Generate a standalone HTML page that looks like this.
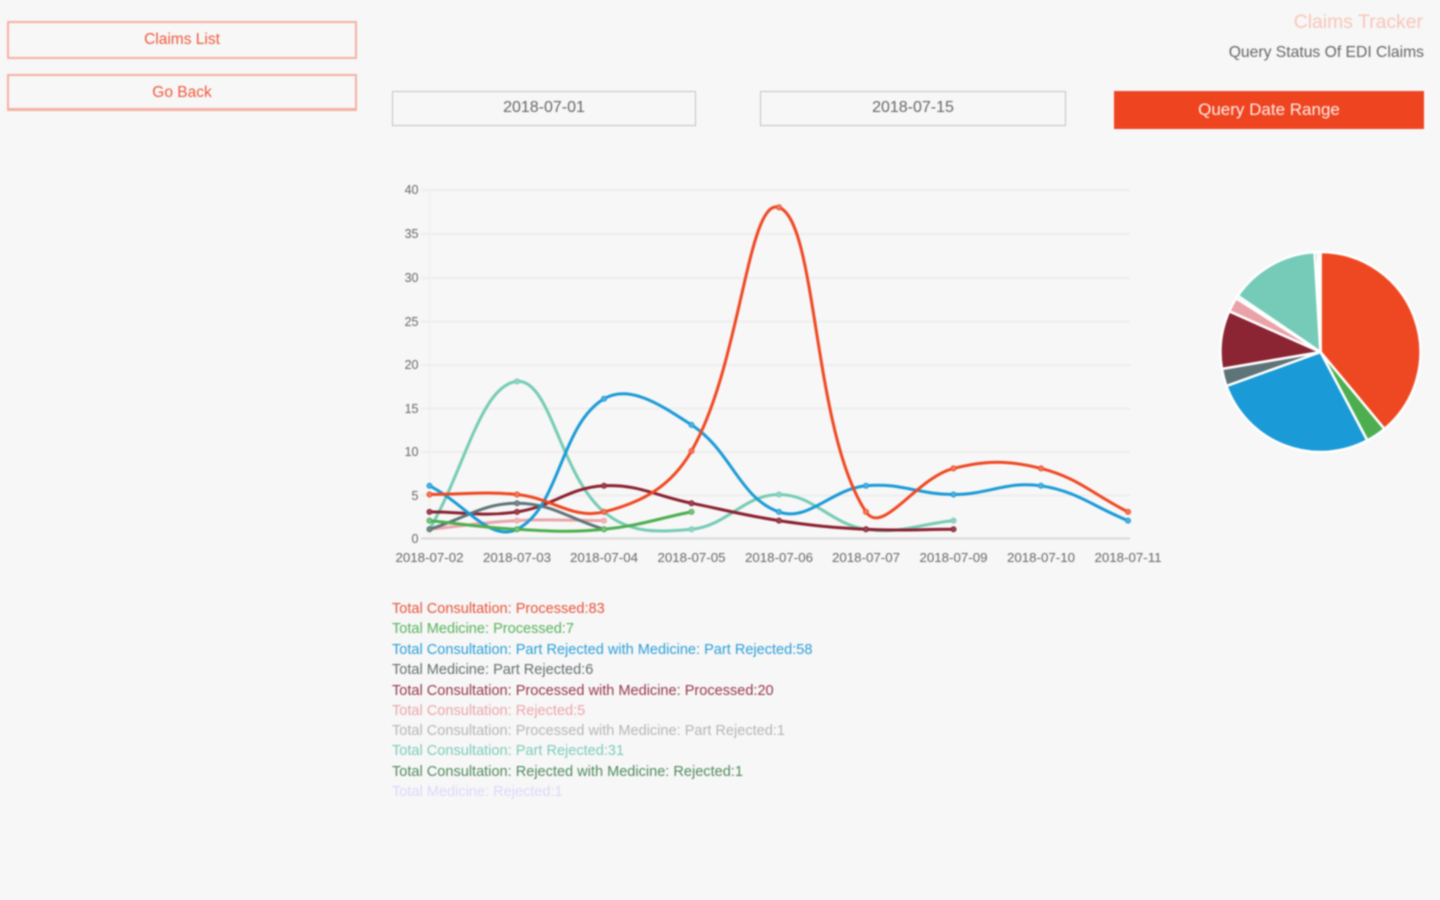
<!DOCTYPE html>
<html><head><meta charset="utf-8"><title>Claims Tracker</title>
<style>
html,body{margin:0;padding:0;width:1440px;height:900px;overflow:hidden;background:#f7f7f7}
#w{position:absolute;left:0;top:0;width:1440px;height:900px;filter:blur(.75px);font-family:"Liberation Sans",sans-serif}
.a{position:absolute;box-sizing:border-box;white-space:nowrap}
.b{border:2px solid #f5b0a3;color:#ee5a3c;text-align:center;font-size:15.500px;left:7px;width:350px}
.d{border:1.500px solid #c2c4c4;color:#666;text-align:center;font-size:16px;height:35px;top:91px;line-height:32px}
.l{position:absolute;left:392px;font-size:14.550px;line-height:20px;white-space:nowrap}
svg text{font-family:"Liberation Sans",sans-serif}
</style></head><body>
<div id="w">
<div class="a b" style="top:21px;height:38px;line-height:33px">Claims List</div>
<div class="a b" style="top:74px;height:37px;line-height:33px;border-bottom-width:3px">Go Back</div>
<div class="a" style="right:17px;top:10px;font-size:19.400px;line-height:24px;color:#f8c6b8">Claims Tracker</div>
<div class="a" style="right:16px;top:43px;font-size:15.700px;line-height:20px;color:#666">Query Status Of EDI Claims</div>
<div class="a d" style="left:392px;width:304px">2018-07-01</div>
<div class="a d" style="left:760px;width:306px">2018-07-15</div>
<div class="a" style="left:1114px;top:91px;width:310px;height:38px;background:#ee4420;color:#fdeee8;text-align:center;font-size:17px;line-height:37px">Query Date Range</div>

<svg class="a" id="s" style="left:0;top:0" width="1440" height="900" viewBox="0 0 1440 900">
<g id="grid" fill="none" stroke="#ebebeb" stroke-width="1.500">
<path d="M421 190H1130M421 234H1130M421 278H1130M421 321.500H1130M421 365H1130M421 408.500H1130M421 452H1130M421 495.500H1130"/>
<path d="M429.500 190V538" stroke="#efefef"/>
<path d="M421 538.500H1130" stroke="#d8d8d8" stroke-width="2"/>
</g>
<g font-size="12.500" fill="#666" text-anchor="end">
<text x="418.500" y="194">40</text><text x="418.500" y="238">35</text><text x="418.500" y="282">30</text><text x="418.500" y="326">25</text><text x="418.500" y="369">20</text><text x="418.500" y="413">15</text><text x="418.500" y="456">10</text><text x="418.500" y="500">5</text><text x="418.500" y="543">0</text>
</g>
<g font-size="13.300" fill="#666" text-anchor="middle">
<text x="429.500" y="562">2018-07-02</text><text x="517" y="562">2018-07-03</text><text x="604" y="562">2018-07-04</text><text x="691.500" y="562">2018-07-05</text><text x="779" y="562">2018-07-06</text><text x="866" y="562">2018-07-07</text><text x="953.500" y="562">2018-07-09</text><text x="1041" y="562">2018-07-10</text><text x="1128" y="562">2018-07-11</text>
</g>
<g id="lines"></g>
<g id="pie"></g>
</svg>

<div class="l" style="top:599px;color:#e8533a">Total Consultation: Processed:83</div>
<div class="l" style="top:619px;color:#58b25c">Total Medicine: Processed:7</div>
<div class="l" style="top:640px;color:#2a9fd8">Total Consultation: Part Rejected with Medicine: Part Rejected:58</div>
<div class="l" style="top:660px;color:#666e70">Total Medicine: Part Rejected:6</div>
<div class="l" style="top:680.500px;color:#96384a">Total Consultation: Processed with Medicine: Processed:20</div>
<div class="l" style="top:700.500px;color:#eca5aa">Total Consultation: Rejected:5</div>
<div class="l" style="top:721px;color:#b5b5b5">Total Consultation: Processed with Medicine: Part Rejected:1</div>
<div class="l" style="top:741px;color:#7accb8">Total Consultation: Part Rejected:31</div>
<div class="l" style="top:761.500px;color:#4f8a5e">Total Consultation: Rejected with Medicine: Rejected:1</div>
<div class="l" style="top:781.500px;color:#dcd8fa">Total Medicine: Rejected:1</div>
</div>
<script>
(function(){
var X=[429.5,517,604,691.5,779,866,953.5,1041,1128];
function Y(v){return 538-8.7*v}
var sets=[
["#ee4822","#f17a5e",[5,5,3,10,38,3,8,8,3]],
["#4cae4f","#7cc47e",[2,1,1,3]],
["#1a9ad6","#4fb0e0",[6,1,16,13,3,6,5,6,2]],
["#5f7478","#73868a",[1,4,1]],
["#8b2030","#9c4452",[3,3,6,4,2,1,1]],
["#eba3a8","#efb6ba",[1,2,2]],
["#75cbb4","#90d6c4",[1,18,3,1,5,1,2]]
];
function path(d){
 var p=d.map(function(v,i){return [X[i],Y(v)]}),n=p.length,s="M"+p[0][0]+" "+p[0][1],t=.4,cp=[];
 for(var i=0;i<n;i++){
  var a=p[Math.max(i-1,0)],c=p[i],b=p[Math.min(i+1,n-1)];
  var d1=Math.hypot(c[0]-a[0],c[1]-a[1]),d2=Math.hypot(b[0]-c[0],b[1]-c[1]),sum=d1+d2||1;
  var fa=t*d1/sum,fb=t*d2/sum;
  cp.push([[c[0]-fa*(b[0]-a[0]),c[1]-fa*(b[1]-a[1])],[c[0]+fb*(b[0]-a[0]),c[1]+fb*(b[1]-a[1])]]);
 }
 for(i=1;i<n;i++){s+="C"+cp[i-1][1].join(" ")+" "+cp[i][0].join(" ")+" "+p[i].join(" ")}
 return s;
}
var h="";
for(var k=sets.length-1;k>=0;k--){
 var S=sets[k];
 h+='<path d="'+path(S[2])+'" fill="none" stroke="'+S[0]+'" stroke-width="3"/>';
 S[2].forEach(function(v,i){h+='<circle cx="'+X[i]+'" cy="'+Y(v)+'" r="2.500" fill="'+S[1]+'" stroke="'+S[0]+'" stroke-width="1"/>'});
}
document.getElementById("lines").innerHTML=h;
var P=[[83,"#ee4822"],[7,"#4cae4f"],[58,"#1a9ad6"],[6,"#5f7478"],[20,"#8b2433"],[5,"#e9a3a8"],[1,"#c4c4c4"],[31,"#75cbb8"],[1,"#4f8a5e"],[1,"#dcd8fa"]];
var tot=213,ang=0,cx=1320.5,cy=352,r=100,o="";
P.forEach(function(q){
 var a0=ang,a1=ang+q[0]/tot*2*Math.PI;ang=a1;
 var x0=cx+r*Math.sin(a0),y0=cy-r*Math.cos(a0),x1=cx+r*Math.sin(a1),y1=cy-r*Math.cos(a1);
 o+='<path d="M'+cx+' '+cy+'L'+x0+' '+y0+'A'+r+' '+r+' 0 '+(a1-a0>Math.PI?1:0)+' 1 '+x1+' '+y1+'Z" fill="'+q[1]+'" stroke="#fff" stroke-width="2.500" stroke-linejoin="round"/>';
});
document.getElementById("pie").innerHTML=o;
})();
</script>
</body></html>
